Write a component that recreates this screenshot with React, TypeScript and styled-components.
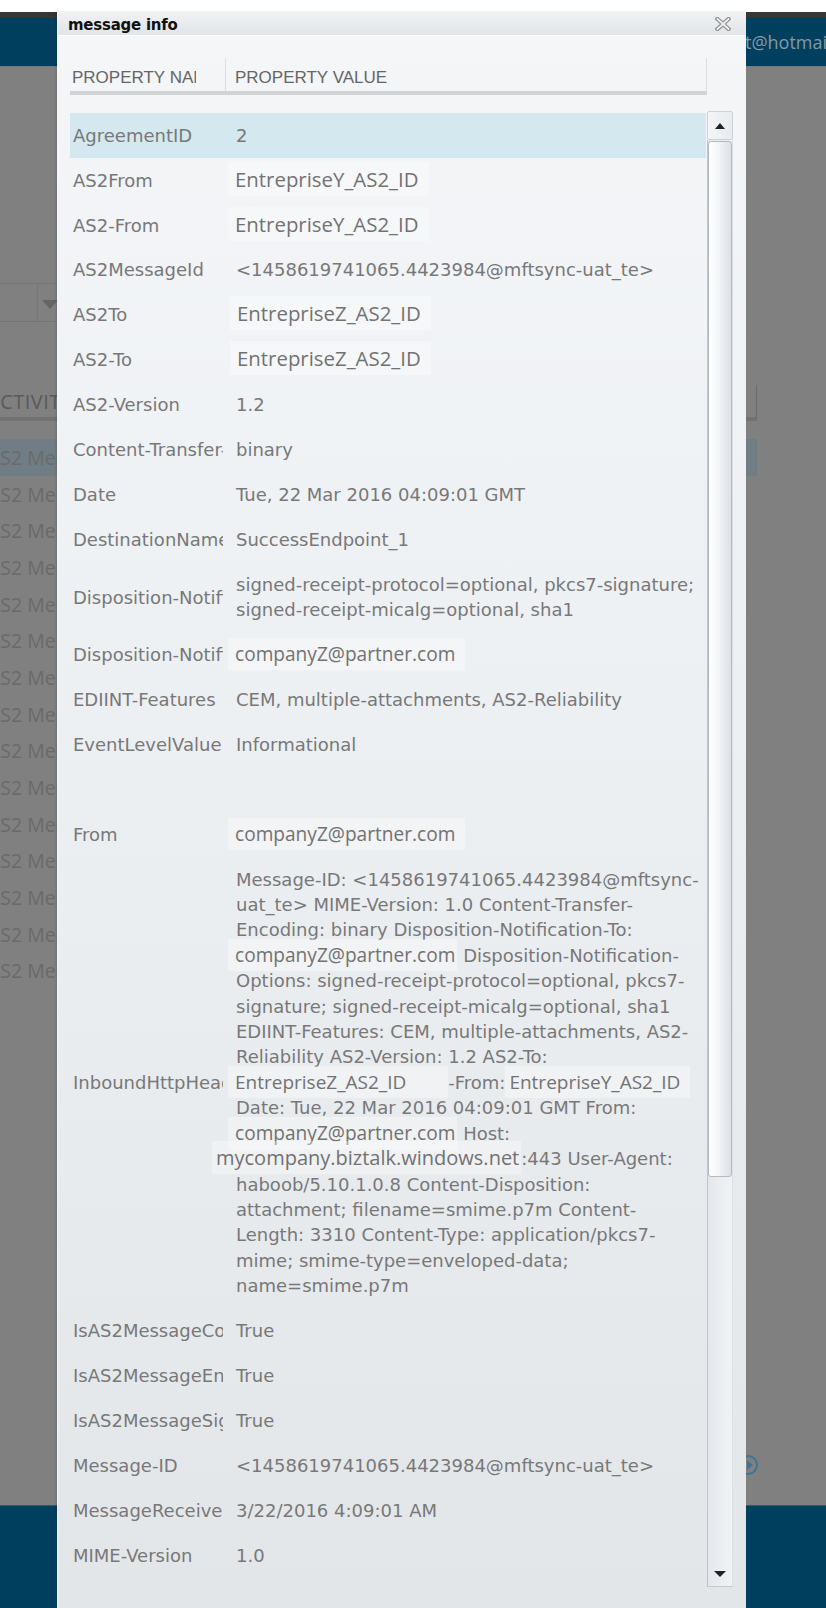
import React from "react";
import styled, { createGlobalStyle } from "styled-components";

const Global = createGlobalStyle`
  html, body { margin: 0; padding: 0; }
  body { width: 826px; height: 1608px; overflow: hidden; background: #808080; }
  #root { width: 826px; height: 1608px; }
`;

/* ---------- dimmed page behind the dialog ---------- */
const Page = styled.div`
  position: relative;
  width: 826px;
  height: 1608px;
  overflow: hidden;
  display: flex;
  flex-direction: column;
  background: #808080;
  font-family: "Open Sans", "DejaVu Sans", sans-serif;
`;
const TopGap = styled.div`
  flex: none;
  height: 12px;
  background: #ffffff;
`;
const DarkStrip = styled.div`
  flex: none;
  height: 6px;
  background: #363636;
`;
const AppHeader = styled.header`
  flex: none;
  height: 48px;
  background: #003f5e;
  border-bottom: 1px solid #707a80;
  display: flex;
  align-items: center;
  padding-left: 745px;
  overflow: hidden;
`;
const UserName = styled.span`
  color: #8798a3;
  font-size: 18px;
  white-space: nowrap;
`;
const AppBody = styled.main`
  flex: 1;
  display: flex;
  flex-direction: column;
  padding-top: 216px;
`;
const Dropdown = styled.div`
  width: 61px;
  height: 39px;
  box-sizing: border-box;
  border-top: 1px solid #747474;
  border-bottom: 1px solid #747474;
  display: flex;
`;
const DropdownText = styled.div`
  width: 37px;
  border-right: 1px solid #777;
`;
const DropdownButton = styled.div`
  flex: 1;
  display: flex;
  align-items: center;
  justify-content: center;
  padding-top: 3px;
  &::after {
    content: "";
    border-left: 8px solid transparent;
    border-right: 8px solid transparent;
    border-top: 9px solid #656565;
  }
`;
const BgTable = styled.div`
  margin-top: 63px;
  width: 757px;
  display: flex;
  flex-direction: column;
`;
const BgHeader = styled.div`
  height: 32px;
  border-bottom: 4px solid #727272;
  border-right: 1px solid #6c6c6c;
  display: flex;
  align-items: center;
  overflow: hidden;
`;
const BgHeaderText = styled.span`
  margin-left: -13px;
  font-size: 20px;
  color: #5a5a5a;
  letter-spacing: 0.5px;
  white-space: nowrap;
`;
const BgRows = styled.div`
  margin-top: 18px;
  display: flex;
  flex-direction: column;
`;
const BgRow = styled.div<{ $selected?: boolean }>`
  height: 36.7px;
  display: flex;
  align-items: center;
  overflow: hidden;
  background: ${(p) => (p.$selected ? "#717d84" : "transparent")};
`;
const BgRowText = styled.span`
  margin-left: -12px;
  font-size: 19.5px;
  color: #6a6a6a;
  white-space: nowrap;
`;
const PagerRow = styled.div`
  margin-top: auto;
  margin-bottom: 30px;
  padding-left: 738px;
  display: flex;
`;
const PagerButton = styled.div`
  width: 20px;
  height: 20px;
  box-sizing: border-box;
  border: 2px solid #3e7394;
  border-radius: 50%;
  display: flex;
  align-items: center;
  justify-content: center;
  &::after {
    content: "";
    margin-left: 3px;
    border-top: 5px solid transparent;
    border-bottom: 5px solid transparent;
    border-left: 6px solid #3e7394;
  }
`;
const AppFooter = styled.footer`
  flex: none;
  height: 102px;
  background: #003f5e;
  border-top: 1px solid #33586d;
`;

/* ---------- dialog ---------- */
const Modal = styled.section`
  position: absolute;
  left: 57px;
  top: 12px;
  bottom: 0;
  width: 689px;
  box-sizing: border-box;
  border-left: 1px solid #f6f7f8;
  background: linear-gradient(180deg, #f4f6f8 0%, #eceff2 50%, #e3e6e9 100%);
  display: flex;
  flex-direction: column;
  box-shadow: -1px 0 2px rgba(0, 0, 0, 0.15);
`;
const TitleBar = styled.div`
  flex: none;
  height: 21px;
  padding: 2px 15px 0 10px;
  background: linear-gradient(180deg, #eff1f3 0%, #e2e5e8 100%);
  border-bottom: 1px solid #ffffff;
  display: flex;
  align-items: center;
  justify-content: space-between;
`;
const Title = styled.h1`
  margin: 0;
  font-family: "DejaVu Sans Condensed", "DejaVu Sans", sans-serif;
  font-stretch: condensed;
  font-weight: bold;
  font-size: 16.6px;
  color: #111;
  letter-spacing: -0.2px;
`;
const CloseButton = styled.button`
  border: 0;
  padding: 0;
  margin-top: -2px;
  background: none;
  width: 16px;
  height: 14px;
  display: flex;
`;
const Content = styled.div`
  flex: 1;
  min-height: 0;
  display: flex;
  flex-direction: column;
  padding: 22px 0 0 12px;
`;
const ColumnHeader = styled.div`
  flex: none;
  width: 636px;
  height: 33px;
  border-bottom: 4px solid #d1d3d5;
  border-right: 1px solid #dadde0;
  display: grid;
  grid-template-columns: 156px 1fr;
  font-family: "Liberation Sans", Arial, sans-serif;
  font-size: 17px;
  color: #666;
`;
const HeaderCell = styled.div<{ $first?: boolean }>`
  display: flex;
  align-items: center;
  padding-top: 6px;
  white-space: nowrap;
  padding-left: ${(p) => (p.$first ? "2px" : "9px")};
  border-right: ${(p) => (p.$first ? "1px solid #dcdfe2" : "0")};
`;
const HeaderLabel = styled.span<{ $clip?: number }>`
  display: block;
  overflow: hidden;
  ${(p) => (p.$clip ? `width: ${p.$clip}px;` : "")}
`;
const ScrollArea = styled.div`
  flex: none;
  margin-top: 16px;
  height: 1476px;
  display: flex;
  gap: 1px;
`;
const Viewport = styled.div`
  width: 636px;
  overflow: hidden;
  padding-top: 2px;
  font-family: "DejaVu Sans", Verdana, sans-serif;
  font-size: 18px;
  line-height: 25.4px;
  color: #787878;
`;
const Row = styled.div<{ $selected?: boolean }>`
  display: grid;
  grid-template-columns: 166px 1fr;
  align-items: center;
  padding: 9.75px 0;
  min-height: 25.4px;
  background: ${(p) => (p.$selected ? "#d4e8ef" : "transparent")};
`;
const NameCell = styled.div`
  min-width: 0;
  padding-left: 3px;
  margin-right: 13px;
  overflow: hidden;
  white-space: nowrap;
`;
const ValueCell = styled.div`
  white-space: nowrap;
`;
const Line = styled.div``;
const Patch = styled.span<{
  $padRight?: number;
  $shift?: number;
  $padLeft?: number;
  $size?: number;
}>`
  font-family: "Open Sans", "Noto Sans", sans-serif;
  font-size: ${(p) => p.$size ?? 20.4}px;
  line-height: 20px;
  color: #727272;
  background: rgba(255, 255, 255, 0.32);
  padding: 3px ${(p) => p.$padRight ?? 10}px 3px ${(p) => p.$padLeft ?? 7}px;
  margin-left: ${(p) => p.$shift ?? -8}px;
`;

const Scrollbar = styled.div`
  width: 26px;
  display: flex;
  flex-direction: column;
`;
const ArrowButton = styled.div`
  flex: none;
  height: 29px;
  box-sizing: border-box;
  border: 1px solid #cdd2d7;
  border-radius: 2px;
  background: linear-gradient(90deg, #f3f5f7, #e8ecef);
  display: flex;
  align-items: center;
  justify-content: center;
  &::after {
    content: "";
    border-left: 5px solid transparent;
    border-right: 5px solid transparent;
    border-bottom: 6px solid #222;
  }
`;
const Track = styled.div`
  flex: 1;
  display: flex;
  flex-direction: column;
  box-sizing: border-box;
  border-left: 1px solid #bfc5cb;
  border-bottom: 1px solid #c3c9ce;
  border-right: 1px solid #dde1e5;
  background: linear-gradient(90deg, #e4e8ec, #f0f3f6);
`;
const Thumb = styled.div`
  flex: none;
  height: 1036px;
  margin-top: 1px;
  box-sizing: border-box;
  border: 1px solid #b2bac2;
  border-radius: 3px;
  background: linear-gradient(90deg, #ffffff 0%, #f4f6f8 40%, #dbe1e7 100%);
`;
const TrackRest = styled.div`
  flex: 1;
  display: flex;
  flex-direction: column;
  justify-content: flex-end;
  align-items: center;
  padding-bottom: 9px;
  &::after {
    content: "";
    border-left: 6px solid transparent;
    border-right: 6px solid transparent;
    border-top: 6px solid #222;
  }
`;

type Prop = { name: string; value: React.ReactNode; selected?: boolean };

const EMAIL_SIZE = 19.1;

const inbound: React.ReactNode[] = [
  "Message-ID: <1458619741065.4423984@mftsync-",
  "uat_te> MIME-Version: 1.0 Content-Transfer-",
  "Encoding: binary Disposition-Notification-To:",
  <>
    <Patch $size={EMAIL_SIZE} $padRight={2}>
      companyZ@partner.com
    </Patch>{" "}
    Disposition-Notification-
  </>,
  "Options: signed-receipt-protocol=optional, pkcs7-",
  "signature; signed-receipt-micalg=optional, sha1",
  "EDIINT-Features: CEM, multiple-attachments, AS2-",
  "Reliability AS2-Version: 1.2 AS2-To:",
  <>
    <Patch $size={19} $padRight={42}>
      EntrepriseZ_AS2_ID
    </Patch>
    -From:
    <Patch $size={19} $shift={0} $padLeft={4}>
      EntrepriseY_AS2_ID
    </Patch>
  </>,
  "Date: Tue, 22 Mar 2016 04:09:01 GMT From:",
  <>
    <Patch $size={EMAIL_SIZE} $padRight={2}>
      companyZ@partner.com
    </Patch>{" "}
    Host:
  </>,
  <>
    <Patch $size={20} $shift={-24} $padLeft={4} $padRight={2}>
      mycompany.biztalk.windows.net
    </Patch>
    :443 User-Agent:
  </>,
  "haboob/5.10.1.0.8 Content-Disposition:",
  "attachment; filename=smime.p7m Content-",
  "Length: 3310 Content-Type: application/pkcs7-",
  "mime; smime-type=enveloped-data;",
  "name=smime.p7m",
];

const props: Prop[] = [
  { name: "AgreementID", value: "2", selected: true },
  { name: "AS2From", value: <Patch>EntrepriseY_AS2_ID</Patch> },
  { name: "AS2-From", value: <Patch>EntrepriseY_AS2_ID</Patch> },
  { name: "AS2MessageId", value: "<1458619741065.4423984@mftsync-uat_te>" },
  { name: "AS2To", value: <Patch $shift={-6}>EntrepriseZ_AS2_ID</Patch> },
  { name: "AS2-To", value: <Patch $shift={-6}>EntrepriseZ_AS2_ID</Patch> },
  { name: "AS2-Version", value: "1.2" },
  { name: "Content-Transfer-Encoding", value: "binary" },
  { name: "Date", value: "Tue, 22 Mar 2016 04:09:01 GMT" },
  { name: "DestinationName", value: "SuccessEndpoint_1" },
  {
    name: "Disposition-Notification-Options",
    value: (
      <>
        <Line>signed-receipt-protocol=optional, pkcs7-signature;</Line>
        <Line>signed-receipt-micalg=optional, sha1</Line>
      </>
    ),
  },
  {
    name: "Disposition-Notification-To",
    value: <Patch $size={EMAIL_SIZE}>companyZ@partner.com</Patch>,
  },
  { name: "EDIINT-Features", value: "CEM, multiple-attachments, AS2-Reliability" },
  { name: "EventLevelValue", value: "Informational" },
  { name: "", value: "" },
  { name: "From", value: <Patch $size={EMAIL_SIZE}>companyZ@partner.com</Patch> },
  {
    name: "InboundHttpHeaders",
    value: (
      <>
        {inbound.map((l, i) => (
          <Line key={i}>{l}</Line>
        ))}
      </>
    ),
  },
  { name: "IsAS2MessageCompressed", value: "True" },
  { name: "IsAS2MessageEncrypted", value: "True" },
  { name: "IsAS2MessageSigned", value: "True" },
  { name: "Message-ID", value: "<1458619741065.4423984@mftsync-uat_te>" },
  { name: "MessageReceivedTime", value: "3/22/2016 4:09:01 AM" },
  { name: "MIME-Version", value: "1.0" },
];

const CloseIcon = () => (
  <svg width="16" height="14" viewBox="0 0 16 14">
    <path d="M2.5 2 L13.5 12 M13.5 2 L2.5 12" stroke="#8c8c8c" strokeWidth="4.2" strokeLinecap="square" fill="none" />
    <path d="M2.5 2 L13.5 12 M13.5 2 L2.5 12" stroke="#f2f3f4" strokeWidth="1.8" strokeLinecap="square" fill="none" />
  </svg>
);

export default function App() {
  const bgRows = Array.from({ length: 15 }, (_, i) => i);
  return (
    <>
      <Global />
      <Page>
        <TopGap />
        <DarkStrip />
        <AppHeader>
          <UserName>t@hotmail.com</UserName>
        </AppHeader>
        <AppBody>
          <Dropdown>
            <DropdownText />
            <DropdownButton />
          </Dropdown>
          <BgTable>
            <BgHeader>
              <BgHeaderText>ACTIVITY</BgHeaderText>
            </BgHeader>
            <BgRows>
              {bgRows.map((i) => (
                <BgRow key={i} $selected={i === 0}>
                  <BgRowText>AS2 Message</BgRowText>
                </BgRow>
              ))}
            </BgRows>
          </BgTable>
          <PagerRow>
            <PagerButton />
          </PagerRow>
        </AppBody>
        <AppFooter />

        <Modal>
          <TitleBar>
            <Title>message info</Title>
            <CloseButton aria-label="close">
              <CloseIcon />
            </CloseButton>
          </TitleBar>
          <Content>
            <ColumnHeader>
              <HeaderCell $first>
                <HeaderLabel $clip={124}>PROPERTY NAME</HeaderLabel>
              </HeaderCell>
              <HeaderCell>
                <HeaderLabel>PROPERTY VALUE</HeaderLabel>
              </HeaderCell>
            </ColumnHeader>
            <ScrollArea>
              <Viewport>
                {props.map((p, i) => (
                  <Row key={i} $selected={p.selected}>
                    <NameCell>{p.name}</NameCell>
                    <ValueCell>{p.value}</ValueCell>
                  </Row>
                ))}
              </Viewport>
              <Scrollbar>
                <ArrowButton />
                <Track>
                  <Thumb />
                  <TrackRest />
                </Track>
              </Scrollbar>
            </ScrollArea>
          </Content>
        </Modal>
      </Page>
    </>
  );
}
